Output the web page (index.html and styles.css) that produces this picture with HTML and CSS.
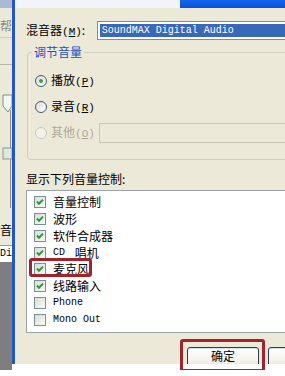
FILE: index.html
```html
<!DOCTYPE html>
<html lang="zh-CN">
<head>
    <meta charset="UTF-8">
    <title>属性</title>
    <link rel="stylesheet" href="styles.css">
</head>
<body>
    <div class="screen">
        <div class="side">
            <div class="side-top"></div>
            <div class="side-menu">帮</div>
            <div class="side-track">
                <svg width="12" height="182" viewBox="0 0 12 182">
                    <line x1="0" y1="26.5" x2="12" y2="26.5" stroke="#b9b6a6"/>
                    <line x1="10.5" y1="72" x2="10.5" y2="170" stroke="#8d8d86"/>
                    <path d="M3 57 H12 V68 L8 74 L3 68 Z" fill="#f4f7ef" stroke="#7f8f80"/>
                    <rect x="3" y="110" width="9" height="11" fill="#dfe9d6" stroke="#8b9a88"/>
                </svg>
            </div>
            <div class="side-name">音</div>
            <div class="side-field">Di</div>
            <div class="side-gray"></div>
        </div>

        <div class="dialog">
            <div class="titlebar">
                <div class="title-light"></div>
                <div class="title-blue"></div>
            </div>
            <div class="content">
                <div class="mixer-row">
                    <span class="mixer-label">混音器<span class="mn">(<u>M</u>)</span>:</span>
                    <div class="combo">
                        <div class="combo-sel">SoundMAX Digital Audio</div>
                    </div>
                </div>

                <fieldset class="group">
                    <legend>调节音量</legend>
                    <div class="radio-row">
                        <span class="radio on"></span>
                        <span>播放<span class="mn">(<u>P</u>)</span></span>
                    </div>
                    <div class="radio-row">
                        <span class="radio"></span>
                        <span>录音<span class="mn">(<u>R</u>)</span></span>
                    </div>
                    <div class="radio-row disabled">
                        <span class="radio"></span>
                        <span>其他<span class="mn">(<u>O</u>)</span></span>
                        <div class="text-box"></div>
                    </div>
                </fieldset>

                <div class="list-label">显示下列音量控制:</div>
                <ul class="listbox">
                    <li><span class="check on"><svg viewBox="0 0 10 10"><path d="M2 4.5 L4 6.8 L8 2.6" /></svg></span>音量控制</li>
                    <li><span class="check on"><svg viewBox="0 0 10 10"><path d="M2 4.5 L4 6.8 L8 2.6" /></svg></span>波形</li>
                    <li><span class="check on"><svg viewBox="0 0 10 10"><path d="M2 4.5 L4 6.8 L8 2.6" /></svg></span>软件合成器</li>
                    <li><span class="check on"><svg viewBox="0 0 10 10"><path d="M2 4.5 L4 6.8 L8 2.6" /></svg></span><span class="lat">CD</span>&nbsp;唱机</li>
                    <li class="marked"><span class="check on"><svg viewBox="0 0 10 10"><path d="M2 4.5 L4 6.8 L8 2.6" /></svg></span>麦克风<span class="mark"></span></li>
                    <li><span class="check on"><svg viewBox="0 0 10 10"><path d="M2 4.5 L4 6.8 L8 2.6" /></svg></span>线路输入</li>
                    <li><span class="check"></span><span class="lat">Phone</span></li>
                    <li><span class="check"></span><span class="lat">Mono Out</span></li>
                </ul>

                <div class="buttons">
                    <div class="btn-wrap">
                        <div class="btn-clip"><div class="btn">确定</div></div>
                        <span class="mark btn-mark"></span>
                    </div>
                    <div class="btn-wrap">
                        <div class="btn-clip"><div class="btn"></div></div>
                    </div>
                </div>
            </div>
        </div>
    </div>
</body>
</html>
```
FILE: styles.css
```css
* {
    margin: 0;
    padding: 0;
    box-sizing: border-box;
}

html, body {
    overflow: hidden;
}

body {
    background-color: #fff;
    font-family: "Noto Sans CJK SC", "Liberation Sans", sans-serif;
    font-size: 12px;
    line-height: 16px;
    color: #000;
}

.screen {
    display: flex;
    align-items: flex-start;
}

/* window behind the dialog */
.side {
    width: 12px;
    height: 370px;
    flex-shrink: 0;
    display: flex;
    flex-direction: column;
    background-color: #ece9d8;
    overflow: hidden;
}

.side-top {
    height: 8px;
    background-color: #a9b9d6;
}

.side-menu {
    height: 30px;
    padding-top: 10px;
    border-bottom: 1px solid #cfcbb8;
    color: #8a8a8a;
}

.side-track {
    height: 182px;
}

.side-track svg {
    display: block;
}

.side-name {
    height: 20px;
    line-height: 20px;
}

.side-field {
    margin-top: 5px;
    height: 17px;
    background-color: #fff;
    border-top: 1px solid #9a9a9a;
    font-family: "Liberation Mono", monospace;
    font-size: 10px;
    line-height: 16px;
}

.side-gray {
    flex: 1;
    background-color: #7e7e7e;
}

/* dialog */
.dialog {
    flex-shrink: 0;
    width: 340px;
    background-color: #ece9d8;
    border-left: 3px solid #2357c9;
}

.titlebar {
    display: flex;
    height: 8px;
}

.title-light {
    width: 165px;
    background-color: #f2f4f7;
}

.title-blue {
    flex: 1;
    background: linear-gradient(#1466ee, #0b4fd6);
}

.content {
    padding-left: 11px;
}

.mn {
    font-family: "Liberation Mono", monospace;
    font-size: 11px;
}

.mixer-row {
    display: flex;
    align-items: center;
    margin-top: 13px;
}

.mixer-label {
    width: 72px;
    white-space: nowrap;
}

.combo {
    width: 260px;
    height: 19px;
    padding: 2px;
    border: 1px solid #7f8c99;
    background-color: #fff;
}

.combo-sel {
    height: 13px;
    padding-left: 2px;
    background-color: #3a68b8;
    color: #fff;
    font-family: "Liberation Mono", monospace;
    font-size: 10px;
    line-height: 13px;
}

.group {
    width: 320px;
    margin: 4px 0 0 1px;
    padding: 8px 0 13px 4px;
    border: 1px solid #d0cdbd;
    border-radius: 4px;
}

.group legend {
    padding: 0 2px;
    color: #1f4fc4;
    font-size: 12px;
}

.radio-row {
    display: flex;
    align-items: center;
    height: 26px;
    white-space: nowrap;
}

.radio-row > * {
    flex-shrink: 0;
}

.radio {
    width: 12px;
    height: 12px;
    margin: 0 4px 0 3px;
    border: 1px solid #3d5a72;
    border-radius: 50%;
    background: linear-gradient(135deg, #dcdcd4, #fff);
    display: flex;
    align-items: center;
    justify-content: center;
}

.radio.on::after {
    content: "";
    width: 4px;
    height: 4px;
    border-radius: 50%;
    background-color: #3aa33a;
}

.radio-row.disabled {
    color: #aca899;
}

.radio-row.disabled .radio {
    border-color: #cac8bb;
    background: #f3f1e8;
}

.text-box {
    width: 230px;
    height: 20px;
    margin-left: 4px;
    border: 1px solid #c9c6b6;
}

.list-label {
    margin-top: 11px;
}

.listbox {
    list-style: none;
    width: 320px;
    height: 143px;
    margin-top: 3px;
    padding-top: 3px;
    border: 1px solid #98a3ab;
    background-color: #fff;
}

.listbox li {
    position: relative;
    display: flex;
    align-items: center;
    gap: 7px;
    height: 16.75px;
    padding-left: 7px;
    white-space: nowrap;
}

.lat {
    font-family: "Liberation Mono", monospace;
    font-size: 10px;
}

.check {
    width: 12px;
    height: 12px;
    flex-shrink: 0;
    border: 1px solid #7b8f96;
    background: linear-gradient(135deg, #dcdcd4, #fbfbf8);
}

.check svg {
    display: block;
    width: 10px;
    height: 10px;
}

.check path {
    fill: none;
    stroke: #2b9a3a;
    stroke-width: 2;
}

.mark {
    position: absolute;
    border: 3px solid #a3232d;
    border-radius: 3px;
}

.marked .mark {
    left: 2px;
    top: -3px;
    width: 63px;
    height: 19px;
}

.buttons {
    display: flex;
    gap: 9px;
    margin-top: 14px;
    padding-left: 161px;
}

.btn-wrap {
    position: relative;
}

.btn-clip {
    height: 17px;
    overflow: hidden;
}

.btn {
    width: 72px;
    height: 23px;
    border: 1px solid #2e3f55;
    border-radius: 3px;
    background: linear-gradient(#fff, #f3f2ec 60%, #e3e0d4);
    box-shadow: inset 0 1px 0 #cfe0f5;
    text-align: center;
    line-height: 16px;
}

.btn-mark {
    left: -7px;
    top: -8px;
    width: 85px;
    height: 33px;
}
```
